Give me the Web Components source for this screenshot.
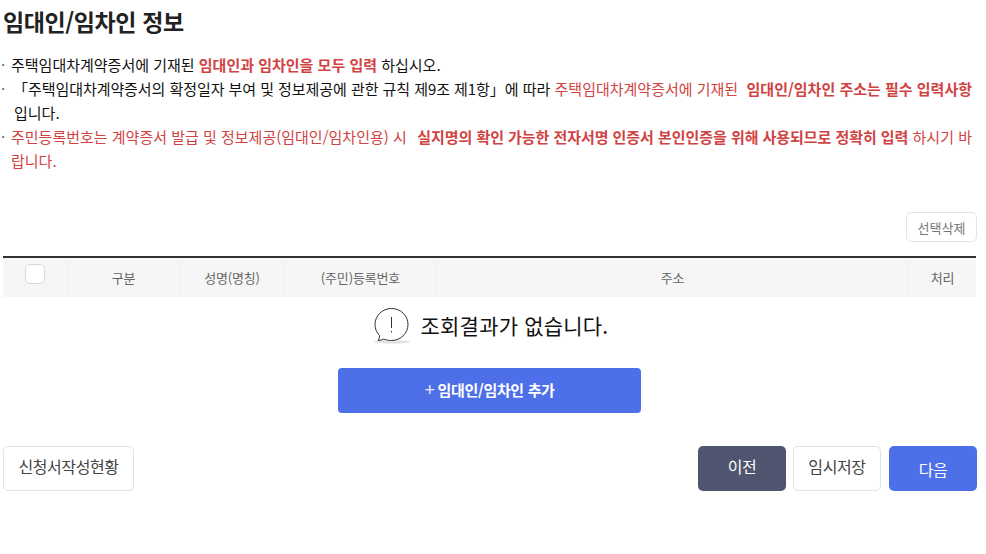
<!DOCTYPE html>
<html lang="ko">
<head>
<meta charset="utf-8">
<title>임대인/임차인 정보</title>
<style>
    html, body { margin: 0; padding: 0; background: #fff; }
    body { font-family: "Noto Sans CJK KR", "Noto Sans", sans-serif; color: #222; }
</style>
</head>
<body>
    <lessor-page>
        <page-title>임대인/임차인 정보</page-title>

        <note-list>
            <note-item>주택임대차계약증서에 기재된 <b class="red">임대인과 임차인을 모두 입력</b> 하십시오.</note-item>
            <note-item indent><span style="letter-spacing:-0.06px">「주택임대차계약증서의 확정일자 부여 및 정보제공에 관한 규칙 제9조 제1항」</span>에 따라 <span class="red">주택임대차계약증서에 기재된</span>&nbsp; <b class="red">임대인/임차인 주소는 필수 입력사항</b> 입니다.</note-item>
            <note-item red>주민등록번호는 계약증서 발급 및 정보제공(임대인/임차인용) 시 &nbsp;<b style="margin-left:2px;letter-spacing:-0.05px">실지명의 확인 가능한 전자서명 인증서 본인인증을 위해 사용되므로 정확히 입력</b> 하시기 바<br>랍니다.</note-item>
        </note-list>

        <party-table></party-table>

        <add-button>임대인/임차인 추가</add-button>

        <footer-bar>
            <action-button slot="left" kind="plain" width="131" shift="-3">신청서작성현황</action-button>
            <action-button slot="right" kind="dark" shift="-3">이전</action-button>
            <action-button slot="right" kind="plain" shift="-3">임시저장</action-button>
            <action-button slot="right" kind="blue" style="margin-left:1px">다음</action-button>
        </footer-bar>
    </lessor-page>

<template id="page-tpl">
    <style>
        :host { display: block; width: 986px; height: 554px; box-sizing: border-box; padding: 0 9px 0 3px; overflow: hidden; }
    </style>
    <slot></slot>
</template>

<template id="title-tpl">
    <style>
        :host { display: block; padding-top: 5px; height: 46px; box-sizing: border-box; font-size: 23px; line-height: 32px; font-weight: 700; letter-spacing: -0.4px; color: #222; }
    </style>
    <slot></slot>
</template>

<template id="list-tpl">
    <style>
        :host { display: block; margin: 7px 0 0 -3px; width: 976px; font-size: 15px; line-height: 24px; letter-spacing: 0; color: #111; }
    </style>
    <slot></slot>
</template>

<template id="item-tpl">
    <style>
        :host { display: block; position: relative; padding-left: 11px; }
        :host([indent]) { padding-left: 14px; text-indent: -1px; }
        :host([red]) { color: #d14343; }
        :host::before { content: "·"; position: absolute; left: 1px; top: 0; color: #666; text-indent: 0; }
    </style>
    <slot></slot>
</template>

<template id="table-tpl">
    <style>
        :host { display: block; margin-top: 39px; width: 974px; }
        .tools { display: flex; justify-content: flex-end; height: 44px; }
        .del { box-sizing: border-box; width: 71px; height: 30px; border: 1px solid #e4e4e4; border-radius: 5px; background: #fff;
               font-size: 13px; letter-spacing: 0; color: #777; display: flex; align-items: center; justify-content: center; }
        .head { display: grid; grid-template-columns: 65px 112px 105px 152px 472px 67px; width: 973px; height: 41px; box-sizing: border-box; border-top: 2px solid #333; background: #f6f6f6; }
        .head div { display: flex; align-items: center; justify-content: center; font-size: 13px; letter-spacing: -0.15px; color: #666; border-right: 1px solid #f1f1f1; box-sizing: border-box; }
        .head div:last-child { border-right: 0; }
        .check { box-sizing: border-box; width: 20px; height: 20px; border: 1px solid #d8d8d8; border-radius: 5px; background: #fff; margin-top: -7px; }
        .empty { display: flex; align-items: center; justify-content: center; gap: 9px; height: 62px; box-sizing: border-box; padding: 0 0 6px 2px; font-size: 21px; letter-spacing: 0.2px; color: #111; }
        svg { display: block; margin-top: 2px; }
    </style>
    <div class="tools"><div class="del">선택삭제</div></div>
    <div class="head">
        <div><span class="check"></span></div>
        <div>구분</div>
        <div>성명(명칭)</div>
        <div>(주민)등록번호</div>
        <div>주소</div>
        <div>처리</div>
    </div>
    <div class="empty">
        <svg width="38" height="38" viewBox="0 0 38 38" fill="none">
            <ellipse cx="18" cy="34.800" rx="18" ry="1.800" fill="#e2e2e2"/>
            <g transform="translate(-1.500 0)">
                <path d="M19 1.500c-9.200 0-16.500 7.300-16.500 16 0 4.300 1.700 8.200 4.600 11.100 0 1.700-.5 3.300-1.400 4.900 2.200-.1 4-.7 5.500-1.500 2.400 1 5 1.500 7.800 1.500 9.200 0 16.500-7.300 16.500-16 0-8.900-7.300-16-16.500-16z" stroke="#333" stroke-width="1" fill="#fff"/>
                <path d="M19 10v11M19 24v1.500" stroke="#333" stroke-width="1"/>
            </g>
        </svg>
        <span>조회결과가 없습니다.</span>
    </div>
</template>

<template id="add-tpl">
    <style>
        :host { display: flex; align-items: center; justify-content: center; width: 303px; height: 45px; margin: 9px 0 0 335px; box-sizing: border-box; padding-bottom: 2px;
                background: #4d6fe8; border-radius: 4px; color: #fff; font-size: 15px; font-weight: 700; letter-spacing: -0.35px; }
        .plus { font-family: "Liberation Sans", sans-serif; font-weight: 400; font-size: 18px; line-height: 20px; margin-right: 3px; opacity: .85; }
    </style>
    <span class="plus">+</span><slot></slot>
</template>

<template id="footer-tpl">
    <style>
        :host { display: flex; justify-content: space-between; margin-top: 33px; width: 974px; }
        div { display: flex; gap: 7px; }
    </style>
    <div><slot name="left"></slot></div>
    <div><slot name="right"></slot></div>
</template>

<template id="button-tpl">
    <style>
        :host { display: flex; align-items: center; justify-content: center; box-sizing: border-box; width: 88px; height: 45px; border-radius: 5px; font-size: 16px; letter-spacing: -0.4px; }
        :host([kind="plain"]) { background: #fff; border: 1px solid #e2e2e2; color: #444; }
        :host([kind="dark"]) { background: #50556f; color: #fff; }
        :host([kind="blue"]) { background: #4d6fe8; color: #fff; }
        span { display: block; }
    </style>
    <span><slot></slot></span>
</template>

<script>
    // 템플릿 하나짜리 요소는 공통 클래스로 처리
    class ShadowBox extends HTMLElement {
        connectedCallback() {
            if (this.shadowRoot) return;
            this.attachShadow({ mode: 'open' });
            let tpl = document.querySelector('#' + this.constructor.tpl);
            this.shadowRoot.append(tpl.content.cloneNode(true));
            this.ready();
        }
        ready() {}
    }
    const simple = (name, tpl) => customElements.define(name, class extends ShadowBox { static tpl = tpl; });

    simple('lessor-page', 'page-tpl');
    simple('page-title', 'title-tpl');
    simple('note-item', 'item-tpl');
    simple('party-table', 'table-tpl');
    simple('add-button', 'add-tpl');
    simple('footer-bar', 'footer-tpl');

    // light DOM의 b, span 색은 페이지 쪽 스타일로
    class NoteList extends ShadowBox {
        static tpl = 'list-tpl';
        ready() {
            this.querySelectorAll('.red').forEach(el => el.style.color = '#d14343');
        }
    }
    customElements.define('note-list', NoteList);

    class ActionButton extends ShadowBox {
        static tpl = 'button-tpl';
        ready() {
            let w = this.getAttribute('width');
            if (w) this.style.width = w + 'px';
            let shift = Number(this.getAttribute('shift') || 0);
            // 글자 위치가 버튼마다 조금씩 다름
            let span = this.shadowRoot.querySelector('span');
            if (shift < 0) span.style.paddingBottom = (-shift * 2) + 'px';
            if (shift > 0) span.style.paddingTop = (shift * 2) + 'px';
        }
    }
    customElements.define('action-button', ActionButton);
</script>
</body>
</html>
